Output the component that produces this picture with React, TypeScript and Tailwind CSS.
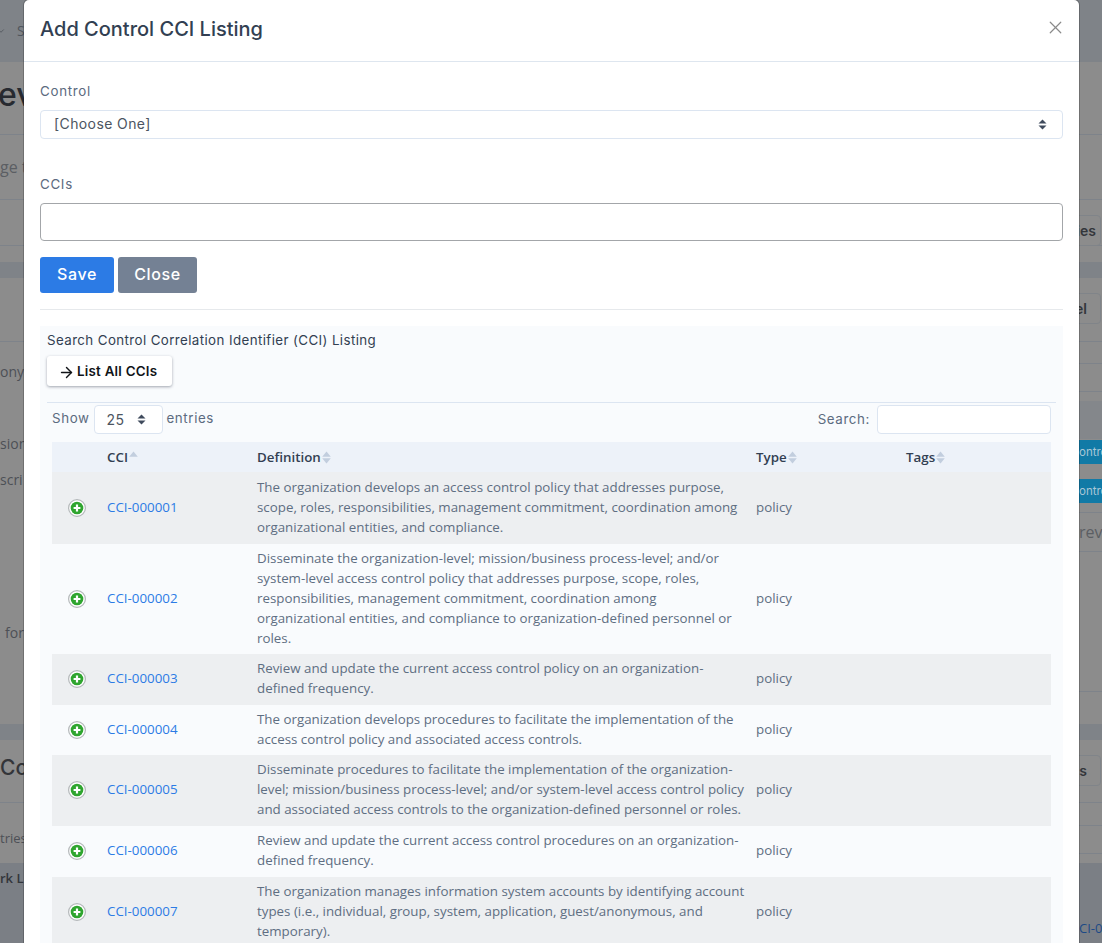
import React from 'react';
import { ArrowRight, ChevronDown, X } from 'lucide-react';

const poppins = "font-['Inter','Liberation_Sans',sans-serif]";
const openSans = "font-['Open_Sans','Liberation_Sans',sans-serif]";

interface CciRow {
  id: string;
  lines: string[];
  height: string;
}

const rows: CciRow[] = [
  {
    id: 'CCI-000001',
    height: 'h-[72px]',
    lines: [
      'The organization develops an access control policy that addresses purpose,',
      'scope, roles, responsibilities, management commitment, coordination among',
      'organizational entities, and compliance.',
    ],
  },
  {
    id: 'CCI-000002',
    height: 'h-[110px]',
    lines: [
      'Disseminate the organization-level; mission/business process-level; and/or',
      'system-level access control policy that addresses purpose, scope, roles,',
      'responsibilities, management commitment, coordination among',
      'organizational entities, and compliance to organization-defined personnel or',
      'roles.',
    ],
  },
  {
    id: 'CCI-000003',
    height: 'h-[51px]',
    lines: [
      'Review and update the current access control policy on an organization-',
      'defined frequency.',
    ],
  },
  {
    id: 'CCI-000004',
    height: 'h-[50px]',
    lines: [
      'The organization develops procedures to facilitate the implementation of the',
      'access control policy and associated access controls.',
    ],
  },
  {
    id: 'CCI-000005',
    height: 'h-[71px]',
    lines: [
      'Disseminate procedures to facilitate the implementation of the organization-',
      'level; mission/business process-level; and/or system-level access control policy',
      'and associated access controls to the organization-defined personnel or roles.',
    ],
  },
  {
    id: 'CCI-000006',
    height: 'h-[51px]',
    lines: [
      'Review and update the current access control procedures on an organization-',
      'defined frequency.',
    ],
  },
  {
    id: 'CCI-000007',
    height: 'h-[70px]',
    lines: [
      'The organization manages information system accounts by identifying account',
      'types (i.e., individual, group, system, application, guest/anonymous, and',
      'temporary).',
    ],
  },
];

const SortArrows = ({ active = false }: { active?: boolean }) => (
  <svg width="9" height="13" viewBox="0 0 9 13" className="ml-px shrink-0">
    <path d="M4.5 0.5 L8.8 5.8 H0.2 Z" fill="#c2cede" />
    {!active && <path d="M4.5 12.5 L8.8 7.2 H0.2 Z" fill="#c2cede" />}
  </svg>
);

const SelectArrows = () => (
  <svg width="9" height="11" viewBox="0 0 9 11" className="shrink-0">
    <path d="M4.5 0.5 L8.5 4.5 H0.5 Z M4.5 10.5 L8.5 6.5 H0.5 Z" fill="#3e4a5c" />
  </svg>
);

const AddIcon = () => (
  <svg width="18" height="18" viewBox="0 0 18 18" className="shrink-0">
    <circle cx="9" cy="9" r="8.4" fill="#ffffff" stroke="#b4b8ba" strokeWidth="1.2" />
    <circle cx="9" cy="9" r="6.3" fill="#2fa52f" />
    <path d="M9 5.6 V12.4 M5.6 9 H12.4" stroke="#ffffff" strokeWidth="2.2" />
  </svg>
);

const BehindButton = ({ label, pad }: { label: string; pad: string }) => (
  <div className={`flex h-[31px] w-[40px] items-center justify-end rounded border border-[#808489] text-sm font-semibold text-[#33363b] ${poppins} ${pad}`}>
    {label}
  </div>
);

// the page behind the dialog, only its edges show
const BackdropPage = () => (
  <div className={`h-[943px] w-full overflow-hidden bg-[#8c8c8c] text-[#4d5056] ${openSans}`}>
    <div className="flex h-[62px] items-center bg-[#7f8388] text-sm text-[#50555c]">
      <div className="flex items-center gap-[11px]">
        <ChevronDown size={10} className="-ml-1" />
        <span>S</span>
      </div>
    </div>
    <div className={`h-[73px] overflow-hidden border-b border-[#7e838a] pt-[11px] text-[32px] leading-[44px] font-medium whitespace-nowrap text-[#272a30] ${poppins}`}>
      <span className="-ml-[2px]">ev</span>
    </div>
    <div className="h-[65px] border-b border-[#7e838a] pt-[20px] text-base leading-6 text-[#5b5e63]">ge t</div>
    <div className="flex h-[46px] justify-end border-b border-[#7e838a] pt-[15px] pr-px">
      <BehindButton label="ies" pad="pr-[4px]" />
    </div>
    <div className="h-[16px]" />
    <div className="h-[16px] bg-[#7f8388]" />
    <div className="flex h-[64px] justify-end border-b border-[#7e838a] pt-[15px] pr-px">
      <BehindButton label="el" pad="pr-[13px]" />
    </div>

    <div className="flex h-[382px] justify-between">
      <div className="w-[24px] text-sm leading-5 whitespace-nowrap">
        <div className="mt-[20px]">ony</div>
        <div className="mt-[52px]">sion</div>
        <div className="mt-[16px]">scri</div>
        <div className="mt-[133px] pl-[5px]">for</div>
      </div>
      <div className="w-[23px] whitespace-nowrap">
        <div className="h-[22px] border-b border-[#7e838a]" />
        <div className="h-[28px] border-b border-[#7e838a]" />
        <div className="mt-[9px] h-[38px] bg-[#84878b]" />
        <div className={`mt-px h-[24px] bg-[#117aa6] text-[11.5px] leading-6 text-[#a9c7d6] ${poppins}`}>ontro</div>
        <div className={`mt-[15px] h-[24px] bg-[#117aa6] text-[11.5px] leading-6 text-[#a9c7d6] ${poppins}`}>ontro</div>
        <div className="h-[10px] border-b border-[#7e838a]" />
        <div className="flex h-[39px] items-center border-b border-[#7e838a] text-base text-[#5b5e63]">revi</div>
        <div className="h-[140px] border-b border-[#7e838a]" />
      </div>
    </div>

    <div className="h-[16px] bg-[#7f8388]" />
    <div className="flex h-[63px] justify-between border-b border-[#7e838a]">
      <span className={`pt-[13px] text-[21px] leading-[30px] font-medium text-[#333539] ${poppins}`}>Co</span>
      <div className="pt-[15px] pr-px">
        <BehindButton label="s" pad="pr-[13px]" />
      </div>
    </div>
    <div className="flex h-[51px] justify-between">
      <span className="pt-[25px] text-[13px] leading-5">tries</span>
      <div className="w-[23px]">
        <div className="h-[23px] border-b border-[#7e838a]" />
        <div className="h-[28px] border-b border-[#7e838a]" />
      </div>
    </div>
    <div className="h-[9px]" />
    <div className="flex h-[80px] justify-between bg-[#7b7f85] text-[13px] leading-5">
      <span className="pt-[5px] font-semibold text-[#33363b]">rk L</span>
      <span className="w-[23px] overflow-hidden pt-[55px] whitespace-nowrap text-[#1d4a86]">CI-0</span>
    </div>
  </div>
);

export default function App() {
  return (
    <div className="relative h-[943px] w-[1102px] overflow-hidden">
      <BackdropPage />

      {/* Modal */}
      <div className={`absolute left-[24px] top-0 w-[1055px] rounded-t-[5px] bg-white shadow-[0_0_0_1px_rgba(0,0,0,0.2)] ${poppins}`}>
        <div className="flex h-[62px] items-start justify-between border-b border-[#dee6ef] pl-4 pr-[13px]">
          <h5 className="mt-[15px] text-[20px] leading-[29px] font-medium text-[#323f52]">Add Control CCI Listing</h5>
          <X size={21} strokeWidth={1.4} className="mt-[17px] text-[#8a8a8a]" />
        </div>

        <div className="px-4 pt-[21px]">
          <label className="block text-[13.33px] leading-4 tracking-[0.7px] text-[#5c6b80]">Control</label>
          <div className="mt-[11px] flex h-[29px] items-center justify-between rounded border border-[#dce5f1] pl-[13px] pr-[15px]">
            <span className="-mt-px text-sm tracking-[0.4px] text-[#4c5561]">[Choose One]</span>
            <SelectArrows />
          </div>

          <label className="mt-[37px] block text-[13.33px] leading-4 tracking-[0.7px] text-[#5c6b80]">CCIs</label>
          <div className="mt-[11px] h-[38px] rounded border border-[#a3a6a9] bg-white" />

          <div className="mt-4 flex gap-1">
            <button className="flex h-9 w-[74px] items-center justify-center rounded-[3px] bg-[#2c7be5] pb-[2px] text-[16px] font-medium tracking-[0.6px] text-white">Save</button>
            <button className="flex h-9 w-[79px] items-center justify-center rounded-[3px] bg-[#748194] pb-[2px] text-[16px] font-medium tracking-[0.6px] text-white">Close</button>
          </div>

          <div className="mt-4 border-t border-[#e6e9ec]" />

          {/* Search panel */}
          <div className="mt-4 bg-[#f9fbfd] px-[7px] pt-[6px] pb-6">
            <div className="text-[13.33px] leading-4 tracking-[0.4px] text-[#323f52]">Search Control Correlation Identifier (CCI) Listing</div>
            <button className="mt-[8px] flex h-[30px] w-[125px] items-center gap-[2px] rounded-[3px] bg-white pt-[2px] pl-[11px] text-[13.33px] font-semibold tracking-[0.25px] text-[#111418] shadow-[0_1px_3px_rgba(50,60,80,0.45)]">
              <ArrowRight size={17} strokeWidth={2} />
              List All CCIs
            </button>

            <div className="mt-[16px] border-t border-[#dce5f1] px-[5px]">
              <div className="flex h-[39px] items-start justify-between pt-[2px]">
                <div className="flex items-center text-[13.33px] tracking-[0.6px] text-[#5c6b80]">
                  <span className="-mt-[2px]">Show</span>
                  <div className="mx-[4px] flex h-[29px] w-[69px] items-center justify-between rounded border border-[#dce5f1] bg-white pl-[12px] pr-[16px]">
                    <span className="text-sm tracking-[0.4px] text-[#4c5561]">25</span>
                    <SelectArrows />
                  </div>
                  <span className="-mt-[2px]">entries</span>
                </div>
                <div className="flex items-center text-[13.33px] tracking-[0.6px] text-[#5c6b80]">
                  <span>Search:</span>
                  <div className="ml-[7px] h-[29px] w-[174px] rounded border border-[#dce5f1] bg-white" />
                </div>
              </div>

              <table className={`w-[999px] table-fixed border-collapse text-[13.33px] leading-5 ${openSans}`}>
                <thead>
                  <tr className="h-[30px] bg-[#edf2f9] font-semibold text-[#323f52]">
                    <th className="w-[55px]" />
                    <th className="w-[150px] text-left font-semibold">
                      <span className="flex items-center">CCI<SortArrows active /></span>
                    </th>
                    <th className="w-[499px] text-left font-semibold">
                      <span className="flex items-center">Definition<SortArrows /></span>
                    </th>
                    <th className="w-[150px] text-left font-semibold">
                      <span className="flex items-center">Type<SortArrows /></span>
                    </th>
                    <th className="text-left font-semibold">
                      <span className="flex items-center">Tags<SortArrows /></span>
                    </th>
                  </tr>
                </thead>
                <tbody>
                  {rows.map((row, i) => (
                    <tr key={row.id} className={`${row.height} ${i % 2 === 0 ? 'bg-[#edeff1]' : ''} text-[#5e6e82]`}>
                      <td className="pb-px">
                        <div className="flex justify-center pr-[5px]">
                          <AddIcon />
                        </div>
                      </td>
                      <td className="pb-[3px] text-[#2c7be5]">{row.id}</td>
                      <td className="pb-[3px] whitespace-nowrap">
                        {row.lines.map((line) => (
                          <div key={line}>{line}</div>
                        ))}
                      </td>
                      <td className="pb-[3px]">policy</td>
                      <td />
                    </tr>
                  ))}
                </tbody>
              </table>
            </div>
          </div>
        </div>
      </div>
    </div>
  );
}
